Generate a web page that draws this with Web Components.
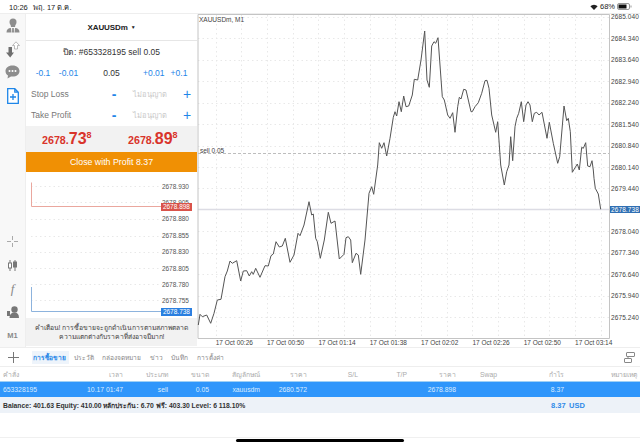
<!DOCTYPE html>
<html>
<head>
<meta charset="utf-8">
<style>
  html, body { margin: 0; padding: 0; background: #fff; }
  body { width: 640px; height: 447px; overflow: hidden; font-family: "Liberation Sans", "Noto Sans", sans-serif; color: #222; }
  mt-app { display: flex; }
</style>
</head>
<body>
<mt-app></mt-app>
<script>
'use strict';

(function() {
  const FONT = '"Liberation Sans", "Noto Sans", sans-serif'

  class StatusBar extends HTMLElement {
    constructor() {
      super()
      this.attachShadow({ mode: 'open' }).innerHTML = `
        <style>
          :host { display: flex; align-items: center; justify-content: space-between; height: 13px; padding: 0 8px 0 9px; font-size: 7.5px; color: #222; background: #fff; }
          .l span { margin-right: 5px; }
          .r { display: flex; align-items: center; gap: 2px; }
        </style>
        <div class="l"><span>10:26</span><span>พฤ. 17 ต.ค.</span></div>
        <div class="r">
          <svg width="8" height="6" viewBox="0 0 18 14"><path d="M9 14 L0.5 5 A12 12 0 0 1 17.5 5 Z" fill="#222"/></svg>
          <span>68%</span>
          <svg width="15" height="7" viewBox="0 0 15 7"><rect x=".5" y=".5" width="12" height="6" rx="1.5" fill="none" stroke="#999"/><rect x="1.5" y="1.5" width="8" height="4" fill="#111"/><rect x="13.5" y="2.500" width="1" height="2" fill="#999"/></svg>
        </div>`
    }
  }

  class SideBar extends HTMLElement {
    constructor() {
      super()
      this.attachShadow({ mode: 'open' }).innerHTML = `
        <style>
          :host { display: flex; flex-direction: column; justify-content: space-between; width: 26px; flex: none; background: #f8f8f8; box-sizing: border-box; border-right: 1px solid #eee; }
          .slot { height: 23.4px; display: flex; align-items: center; justify-content: center; }
          svg { display: block; }
          .m1 { font-size: 7.5px; font-weight: bold; color: #8a8a8a; }
          .fn { font-family: "Liberation Serif", serif; font-style: italic; font-size: 13px; color: #888; }
        </style>
        <div>
          <div class="slot"><svg width="14" height="15" viewBox="0 0 14 15"><circle cx="7" cy="4" r="3.500" fill="#8d8d8d"/><path d="M4.500 6.500 H9.500 L9 9 H5 Z" fill="#8d8d8d"/><path d="M0.500 14.500 Q0.500 10 5 10 L5.500 14.500 Z M6.200 10 H7.800 L8 14.500 H6 Z M9 10 Q13.500 10 13.500 14.500 H8.500 Z" fill="#8d8d8d"/></svg></div>
          <div class="slot"><svg width="14" height="17" viewBox="0 0 14 17"><path d="M2.500 6 H6 V11.500 H8 L4.200 16.500 L0 11.500 H2.500 Z" fill="#6f6f6f"/><path d="M8.500 8 V4.500 H6.500 L10 .8 L13.500 4.500 H11.500 V8 Z" fill="#fff" stroke="#aaa" stroke-width=".8"/></svg></div>
          <div class="slot"><svg width="15" height="14" viewBox="0 0 15 14"><path d="M7.500 .5 C3 .5 .5 3 .5 6 C.5 8 1.500 9.500 3 10.500 L2.500 13.500 L6 11.500 C11 12.200 14.500 9.500 14.500 6 C14.500 3 12 .5 7.500 .5 Z" fill="#8d8d8d"/><circle cx="4.500" cy="6" r="1" fill="#fff"/><circle cx="7.500" cy="6" r="1" fill="#fff"/><circle cx="10.500" cy="6" r="1" fill="#fff"/></svg></div>
          <div class="slot"><svg width="12" height="16" viewBox="0 0 12 16"><path d="M.7 .7 H7.800 L11.300 4.200 V15.300 H.7 Z M7.800 .7 V4.200 H11.300" fill="#fff" stroke="#1f86e8" stroke-width="1.300"/><path d="M3 9 H9 M6 6 V12" stroke="#1f86e8" stroke-width="1.300"/></svg></div>
        </div>
        <div>
          <div class="slot"><svg width="11" height="11" viewBox="0 0 11 11"><path d="M5.500 0 V4 M5.500 7 V11 M0 5.500 H4 M7 5.500 H11" stroke="#aaa" stroke-width="1"/></svg></div>
          <div class="slot"><svg width="9" height="11" viewBox="0 0 9 11"><path d="M2 0 V11 M7 0 V11" stroke="#777"/><rect x=".5" y="3" width="3" height="5" fill="#fff" stroke="#777"/><rect x="5.500" y="2" width="3" height="5" fill="#777" stroke="#777"/></svg></div>
          <div class="slot fn">f</div>
          <div class="slot"><svg width="12" height="12" viewBox="0 0 12 12"><circle cx="7.500" cy="3.500" r="3.200" fill="#777"/><path d="M2.500 12 Q2.500 6.500 7.500 6.500 Q12 6.500 12 12 Z" fill="#777"/><rect x="0" y="5" width="3" height="5" fill="#777"/></svg></div>
          <div class="slot m1">M1</div>
        </div>`
    }
  }

  class OrderPanel extends HTMLElement {
    constructor() {
      super()
      this.attachShadow({ mode: 'open' }).innerHTML = `
        <style>
          :host { display: flex; flex-direction: column; width: 171px; flex: none; background: #fff; position: relative; }
          .title { height: 27px; flex: none; display: flex; align-items: center; justify-content: center; font-size: 8px; font-weight: bold; letter-spacing: -.1px; border-bottom: 1px solid #e6e6e6; box-sizing: border-box; color: #222; }
          .title i { font-style: normal; font-size: 5px; margin-left: 3px; }
          .close { height: 21px; flex: none; display: flex; align-items: center; justify-content: center; font-size: 8.5px; color: #333; }
          .vol { height: 21px; flex: none; display: grid; grid-template-columns: 28px 23px 63px 21px 30px; align-items: center; text-align: center; padding-left: 3px; font-size: 8.5px; color: #1f86e8; }
          .vol b { font-weight: normal; color: #333; }
          .row { height: 21px; flex: none; display: flex; align-items: center; padding-left: 5px; font-size: 8.5px; color: #777; }
          .row .n { width: 78px; }
          .row .m { color: #1f86e8; font-size: 14px; font-weight: bold; width: 10px; text-align: center; }
          .row .v { width: 62px; text-align: center; color: #c8c8c8; font-size: 7.5px; }
          .row .p { color: #1f86e8; font-size: 14px; width: 12px; text-align: center; }
          .prices { height: 26px; flex: none; margin-top: 1px; background: #f2f2f2; display: flex; align-items: center; color: #d9342b; font-weight: bold; padding-left: 16px; }
          .price { width: 86px; flex: none; font-size: 10.7px; display: flex; align-items: baseline; line-height: 1; }
          .price em { font-style: normal; font-size: 16px; font-weight: bold; }
          .price sup { font-size: 9px; line-height: 0; position: relative; top: -6px; }
          .cta { height: 20px; flex: none; background: #f09004; color: #fff; display: flex; align-items: center; justify-content: center; font-size: 8.8px; }
          .depth { flex: 1; position: relative; }
          .warn { position: absolute; left: 0; right: 0; bottom: 1px; height: 28px; box-sizing: border-box; padding-top: 1px; background: #f2f2f2; display: flex; flex-direction: column; justify-content: center; align-items: center; font-size: 6.8px; line-height: 8.500px; color: #444; white-space: nowrap; }
        </style>
        <div class="title">XAUUSDm<i>▼</i></div>
        <div class="close">ปิด: #653328195 sell 0.05</div>
        <div class="vol"><span>-0.1</span><span>-0.01</span><b>0.05</b><span>+0.01</span><span>+0.1</span></div>
        <div class="row"><span class="n">Stop Loss</span><span class="m">-</span><span class="v">ไม่อนุญาต</span><span class="p">+</span></div>
        <div class="row"><span class="n">Take Profit</span><span class="m">-</span><span class="v">ไม่อนุญาต</span><span class="p">+</span></div>
        <div class="prices">
          <div class="price">2678.<em>73</em><sup>8</sup></div>
          <div class="price">2678.<em>89</em><sup>8</sup></div>
        </div>
        <div class="cta">Close with Profit 8.37</div>
        <div class="depth">
          <tick-chart></tick-chart>
          <div class="warn"><span>คำเตือน! การซื้อขายจะถูกดำเนินการตามสภาพตลาด</span><span>ความแตกต่างกับราคาที่ส่งอาจมีมาก!</span></div>
        </div>`
    }
  }

  class TickChart extends HTMLElement {
    constructor() {
      super()
      const labels = [[186.3,'2678.930'],[202.3,'2678.905'],[218.7,'2678.880'],[235.7,'2678.855'],[251.7,'2678.830'],[268,'2678.805'],[284.3,'2678.780'],[300.3,'2678.755']]
      const top = 172
      let grid = '', text = ''
      labels.forEach(function(l) {
        const y = l[0] - top
        grid += `<line x1="5" x2="136" y1="${Math.round(y) + .5}" y2="${Math.round(y) + .5}" stroke="#e8e8e8" stroke-dasharray="1.5 3"/>`
        text += `<span style="top:${(y - 5.5).toFixed(1)}px">${l[1]}</span>`
      })
      this.attachShadow({ mode: 'open' }).innerHTML = `
        <style>
          :host { display: block; position: absolute; inset: 0; }
          svg { position: absolute; left: 0; top: 0; }
          span { position: absolute; right: 8px; font-size: 6.5px; line-height: 11px; color: #555; }
          span.tag { right: 5px; color: #fff; height: 8px; line-height: 8px; padding: 0 2px; }
        </style>
        <svg width="171" height="150">
          ${grid}
          <path d="M5.500 10.500 V34.500 H136" fill="none" stroke="#eaa79e" stroke-width="1"/>
          <path d="M5.500 115 V139.500 H136" fill="none" stroke="#8db3dd" stroke-width="1"/>
        </svg>
        ${text}
        <span class="tag" style="top:31px;background:#d9534a">2678.898</span>
        <span class="tag" style="top:135.500px;background:#2a7fe0">2678.738</span>`
    }
  }

  // price line, traced from the reference, in screen pixels
  const PRICE = [[198.3,325],[200,314.3],[202.3,316.7],[206.7,315],[210.7,323.3],[214,313.3],[217.3,300],[221,299.3],[225,276.7],[227.3,271],[230,261],[232.3,263.3],[236.7,260.7],[240.7,281],[243.3,271],[246.7,270.7],[249.3,276],[251.7,271.7],[253.3,274.3],[255.7,268.3],[260,277.3],[265,265.7],[268.3,266],[271,255.7],[273.3,254],[276,241.7],[279.3,247],[282.3,246],[285.3,238.3],[290,262.3],[294,255],[298,233.3],[300,235.7],[304,225],[309,201.7],[311.7,215],[313.3,214],[315.7,238.3],[317.3,241.7],[320.3,258.3],[324.3,240],[328.3,212.3],[331,223.3],[335,221],[339.3,259],[344,254.3],[346,237.7],[348.3,236.7],[350.7,240],[352.3,262.7],[356,253.3],[358.3,255],[360.7,274.3],[365,240],[369,193.3],[371.7,186.7],[373.7,194.3],[377.7,165],[379.3,142.7],[381.7,148.3],[384,142.7],[386.7,156],[390,138.3],[393.3,117.3],[395,111.7],[396.7,116],[399,101.7],[401.3,111.7],[403.7,96],[406,106.7],[408.7,106],[412.3,95],[414.3,79.3],[417.7,80],[421,60],[424.7,31],[427,80],[429.3,87.3],[431.7,46],[434,41.7],[435.7,43.3],[438,37.7],[442.3,96.7],[444.3,100],[447.7,115],[450,118.3],[452.7,112.7],[455,132.3],[457.7,106.7],[459.3,97.3],[461,99],[463.7,89.3],[466,90],[471,111.7],[472.3,111.7],[475,106.7],[478.3,102.7],[481.7,93.3],[485,80.7],[487,80.3],[489,88.3],[491.7,115],[495.7,132.3],[497.7,121.7],[500.7,165],[504.3,185],[506.7,171.7],[509,165],[510.7,136.7],[512.7,160.7],[515,126.7],[516.7,118.3],[518.7,113.3],[521.3,101.7],[523.7,121.7],[526,105],[528,101.7],[530,105],[532.3,121.7],[534.3,113.3],[536.7,112.3],[539,115],[542,112.3],[547,138.3],[549.3,122.3],[553.3,143.3],[557.7,163.3],[559.7,156.7],[564,106],[566.7,120.7],[568.3,118.3],[570.3,131.7],[572.3,172.3],[577.3,164],[579.3,170],[581.7,147.3],[583.3,148.3],[585.7,142.7],[587.7,166],[590,166.7],[592,160.7],[593.3,170],[594,178.3],[595.3,188.3],[598.3,194],[600.7,209.3]]

  class MainChart extends HTMLElement {
    constructor() {
      super()
      // element starts at x=197, y=14, the traced points are in screen pixels
      const ox = 197, oy = 14
      const prices = ['2685.040','2684.340','2683.640','2682.940','2682.240','2681.540','2680.840','2680.140','2679.440',null,'2678.040','2677.340','2676.640','2675.940','2675.240']
      const times = ['17 Oct 00:26','17 Oct 00:50','17 Oct 01:14','17 Oct 01:38','17 Oct 02:02','17 Oct 02:26','17 Oct 02:50','17 Oct 03:14']
      let grid = '', ylab = '', xlab = ''
      prices.forEach(function(p, i) {
        const y = 16.7 + i * 21.47 - oy
        const ly = Math.round(y) + .5
        if (p) grid += `<line x1="1" x2="412" y1="${ly}" y2="${ly}" stroke="#e8e8e8" stroke-dasharray="1.5 3"/>`
        if (p) ylab += `<span class="y" style="top:${(y - 5.5).toFixed(1)}px">${p}</span>`
      })
      for (let i = 0; i < 16; i++) {
        const x = 215.7 + i * 25.67 - ox
        const lx = Math.round(x) + .5
        grid += `<line x1="${lx}" x2="${lx}" y1="1" y2="324" stroke="#e8e8e8" stroke-dasharray="1.5 3"/>`
        if (i % 2 == 0) xlab += `<span class="x" style="left:${x.toFixed(1)}px">${times[i / 2]}</span>`
      }
      const pts = PRICE.map(function(p) { return (p[0] - ox).toFixed(1) + ',' + (p[1] - oy).toFixed(1) }).join(' ')
      this.attachShadow({ mode: 'open' }).innerHTML = `
        <style>
          :host { display: block; position: relative; flex: 1; font-size: 6.5px; color: #444; }
          svg { position: absolute; left: 0; top: 0; }
          span { position: absolute; line-height: 11px; white-space: nowrap; }
          .y { left: 414px; letter-spacing: .1px; }
          .x { top: 323px; }
          .tag { left: 412.500px; top: 192px; background: #2f6fb3; color: #fff; padding: 0 1.500px; line-height: 7px; height: 7px; letter-spacing: .1px; }
        </style>
        <svg width="443" height="334">
          ${grid}
          <line x1="1" x2="412" y1="139.500" y2="139.500" stroke="#bdbdbd" stroke-dasharray="3 2"/>
          <line x1="1" x2="412" y1="195.500" y2="195.500" stroke="#dcdce4" stroke-width="1.500"/>
          <path d="M1 .5 H412.500 V324.500 H1 Z" fill="none" stroke="#c4c4c4"/>
          <polyline points="${pts}" fill="none" stroke="#555" stroke-width="1"/>
        </svg>
        <span style="left:2px;top:0">XAUUSDm, M1</span>
        <span style="left:3px;top:131px">sell 0.05</span>
        ${ylab}${xlab}
        <span class="tag">2678.738</span>`
    }
  }

  class TabBar extends HTMLElement {
    constructor() {
      super()
      const tabs = ['การซื้อขาย', 'ประวัติ', 'กล่องจดหมาย', 'ข่าว', 'บันทึก', 'การตั้งค่า']
      this.attachShadow({ mode: 'open' }).innerHTML = `
        <style>
          :host { display: flex; align-items: center; height: 20px; box-sizing: border-box; font-size: 6.6px; color: #888; background: #fff; border-top: 1px solid #eee; border-bottom: 1px solid #eee; }
          .plus { width: 26px; flex: none; display: flex; justify-content: center; }
          .tabs { display: flex; gap: 8.5px; flex: 1; align-items: center; padding-left: 6px; }
          .tabs span.on { color: #1f86e8; background: #eef4fb; font-weight: bold; padding: 1px 3px 1px 1px; margin-right: -4px; }
          .rt { margin-right: 5px; display: block; }
        </style>
        <div class="plus"><svg width="11" height="11" viewBox="0 0 11 11"><path d="M5.500 0 V11 M0 5.500 H11" stroke="#777"/></svg></div>
        <div class="tabs">${tabs.map(function(t, i) { return `<span class="${i ? '' : 'on'}">${t}</span>` }).join('')}</div>
        <svg class="rt" width="11" height="11" viewBox="0 0 11 11"><rect x="2.500" y=".5" width="8" height="4" rx=".5" fill="none" stroke="#888"/><rect x=".5" y="6.500" width="7" height="4" rx=".5" fill="none" stroke="#888"/><path d="M4 4.500 V6.500" stroke="#888"/></svg>`
    }
  }

  class OrdersTable extends HTMLElement {
    constructor() {
      super()
      const cols = 'grid-template-columns: 77px 43px 45px 41px 51px 47px 51px 49px 49px 41px 67px 73px;'
      const head = ['คำสั่ง', 'เวลา', 'ประเภท', 'ขนาด', 'สัญลักษณ์', 'ราคา', 'S/L', 'T/P', 'ราคา', 'Swap', 'กำไร', 'หมายเหตุ']
      const row = ['653328195', '10.17 01:47', 'sell', '0.05', 'xauusdm', '2680.572', '', '', '2678.898', '', '8.37', '']
      const cells = function(a) { return a.map(function(c) { return `<span>${c}</span>` }).join('') }
      this.attachShadow({ mode: 'open' }).innerHTML = `
        <style>
          :host { display: block; font-size: 6.8px; background: #fff; }
          .grid { display: grid; ${cols} align-items: center; padding: 0 3px; }
          .grid span { text-align: right; white-space: nowrap; }
          .grid span:first-child { text-align: left; }
          .head { height: 14px; color: #aaa; }
          .row { height: 15px; background: #2f96fb; color: #dcecff; border-top: 1px solid #9fd0f5; }
          .sum { height: 16px; background: #edf2f8; display: flex; align-items: center; padding: 0 3px; font-size: 6.8px; font-weight: bold; color: #333; position: relative; }
          .sum b { position: absolute; left: 551px; font-size: 7.5px; color: #2f8ae8; }
          .sum b + b { left: 569px; }
        </style>
        <div class="grid head">${cells(head)}</div>
        <div class="grid row">${cells(row)}</div>
        <div class="sum"><span>Balance: 401.63 Equity: 410.00 หลักประกัน: 6.70 ฟรี: 403.30 Level: 6 118.10%</span><b>8.37</b><b>USD</b></div>`
    }
  }

  class HomeBar extends HTMLElement {
    constructor() {
      super()
      this.attachShadow({ mode: 'open' }).innerHTML = `
        <style>
          :host { display: flex; flex-direction: column; flex: 1; align-items: center; background: #fff; }
          .gap { height: 24px; width: 100%; border-bottom: 1px solid #f0f0f0; }
          .bar { width: 168px; height: 3px; margin-top: 1px; background: #000; border-radius: 2px; }
        </style>
        <div class="gap"></div>
        <div class="bar"></div>`
    }
  }

  class MtApp extends HTMLElement {
    constructor() {
      super()
      this.attachShadow({ mode: 'open' }).innerHTML = `
        <style>
          :host { display: flex; flex-direction: column; width: 640px; height: 447px; font-family: ${FONT}; }
          .top { display: flex; height: 334px; border-top: 1px solid #eee; box-sizing: border-box; }
        </style>
        <status-bar></status-bar>
        <div class="top">
          <side-bar></side-bar>
          <order-panel></order-panel>
          <main-chart></main-chart>
        </div>
        <tab-bar></tab-bar>
        <orders-table></orders-table>
        <home-bar></home-bar>`
    }
  }

  customElements.define('status-bar', StatusBar)
  customElements.define('side-bar', SideBar)
  customElements.define('tick-chart', TickChart)
  customElements.define('order-panel', OrderPanel)
  customElements.define('main-chart', MainChart)
  customElements.define('tab-bar', TabBar)
  customElements.define('orders-table', OrdersTable)
  customElements.define('home-bar', HomeBar)
  customElements.define('mt-app', MtApp)
})()
</script>
</body>
</html>
